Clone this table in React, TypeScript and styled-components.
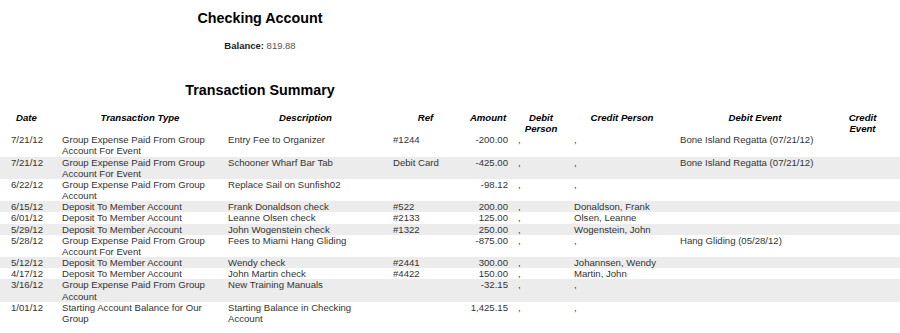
import styled, { createGlobalStyle } from 'styled-components';

type Row = {
  date: string;
  type: string;
  description: string;
  ref: string;
  amount: string;
  debitPerson: string;
  creditPerson: string;
  debitEvent: string;
  creditEvent: string;
};

type Column = {
  key: keyof Row;
  title: string;
  width: number;
  align?: 'left' | 'right';
};

const columns: Column[] = [
  { key: 'date', title: 'Date', width: 57 },
  { key: 'type', title: 'Transaction Type', width: 166 },
  { key: 'description', title: 'Description', width: 165 },
  { key: 'ref', title: 'Ref', width: 75 },
  { key: 'amount', title: 'Amount', width: 50, align: 'right' },
  { key: 'debitPerson', title: 'Debit Person', width: 56 },
  { key: 'creditPerson', title: 'Credit Person', width: 106 },
  { key: 'debitEvent', title: 'Debit Event', width: 160 },
  { key: 'creditEvent', title: 'Credit Event', width: 65 },
];

const expense = 'Group Expense Paid From Group Account For Event';
const deposit = 'Deposit To Member Account';

const rows: Row[] = [
  { date: '7/21/12', type: expense, description: 'Entry Fee to Organizer', ref: '#1244', amount: '-200.00', debitPerson: ',', creditPerson: ',', debitEvent: 'Bone Island Regatta (07/21/12)', creditEvent: '' },
  { date: '7/21/12', type: expense, description: 'Schooner Wharf Bar Tab', ref: 'Debit Card', amount: '-425.00', debitPerson: ',', creditPerson: ',', debitEvent: 'Bone Island Regatta (07/21/12)', creditEvent: '' },
  { date: '6/22/12', type: 'Group Expense Paid From Group Account', description: 'Replace Sail on Sunfish02', ref: '', amount: '-98.12', debitPerson: ',', creditPerson: ',', debitEvent: '', creditEvent: '' },
  { date: '6/15/12', type: deposit, description: 'Frank Donaldson check', ref: '#522', amount: '200.00', debitPerson: ',', creditPerson: 'Donaldson, Frank', debitEvent: '', creditEvent: '' },
  { date: '6/01/12', type: deposit, description: 'Leanne Olsen check', ref: '#2133', amount: '125.00', debitPerson: ',', creditPerson: 'Olsen, Leanne', debitEvent: '', creditEvent: '' },
  { date: '5/29/12', type: deposit, description: 'John Wogenstein check', ref: '#1322', amount: '250.00', debitPerson: ',', creditPerson: 'Wogenstein, John', debitEvent: '', creditEvent: '' },
  { date: '5/28/12', type: expense, description: 'Fees to Miami Hang Gliding', ref: '', amount: '-875.00', debitPerson: ',', creditPerson: ',', debitEvent: 'Hang Gliding (05/28/12)', creditEvent: '' },
  { date: '5/12/12', type: deposit, description: 'Wendy check', ref: '#2441', amount: '300.00', debitPerson: ',', creditPerson: 'Johannsen, Wendy', debitEvent: '', creditEvent: '' },
  { date: '4/17/12', type: deposit, description: 'John Martin check', ref: '#4422', amount: '150.00', debitPerson: ',', creditPerson: 'Martin, John', debitEvent: '', creditEvent: '' },
  { date: '3/16/12', type: 'Group Expense Paid From Group Account', description: 'New Training Manuals', ref: '', amount: '-32.15', debitPerson: ',', creditPerson: ',', debitEvent: '', creditEvent: '' },
  { date: '1/01/12', type: 'Starting Account Balance for Our Group', description: 'Starting Balance in Checking Account', ref: '', amount: '1,425.15', debitPerson: ',', creditPerson: ',', debitEvent: '', creditEvent: '' },
];

function App() {
  const last = columns.length - 1;
  return (
    <Page>
      <GlobalStyle />
      <Heading>
        <Title>Checking Account</Title>
        <BalanceLine>
          <BalanceLabel>Balance:</BalanceLabel> <BalanceValue>819.88</BalanceValue>
        </BalanceLine>
        <SummaryTitle>Transaction Summary</SummaryTitle>
      </Heading>
      <Table>
        <thead>
          <tr>
            {columns.map((col, i) => (
              <HeadCell key={col.key} $first={i === 0} $last={i === last} style={{ width: col.width }}>
                {col.title}
              </HeadCell>
            ))}
          </tr>
        </thead>
        <tbody>
          {rows.map((row, r) => (
            <tr key={r}>
              {columns.map((col, i) => (
                <Cell key={col.key} $first={i === 0} $last={i === last} $align={col.align ?? 'left'}>
                  {row[col.key]}
                </Cell>
              ))}
            </tr>
          ))}
        </tbody>
      </Table>
    </Page>
  );
}

export default App;

const GlobalStyle = createGlobalStyle`
  body {
    margin: 0;
    background: #ffffff;
    font-family: "Liberation Sans", Arial, sans-serif;
  }
`;

const Page = styled.div`
  width: 900px;
  font-family: "Liberation Sans", Arial, sans-serif;
  color: #000;
`;

const Heading = styled.div`
  width: 520px;
  text-align: center;
`;

const Title = styled.h1`
  margin: 10px 0 0;
  font-size: 14.3px;
  line-height: 16px;
  font-weight: bold;
`;

const BalanceLine = styled.div`
  margin-top: 14px;
  font-size: 9.5px;
  line-height: 11px;
`;

const BalanceLabel = styled.span`
  font-weight: bold;
  color: #222;
`;

const BalanceValue = styled.span`
  color: #555;
`;

const SummaryTitle = styled.h2`
  margin: 31px 0 0;
  font-size: 14.3px;
  line-height: 16px;
  font-weight: bold;
`;

const Table = styled.table`
  margin-top: 14px;
  width: 900px;
  table-layout: fixed;
  border-collapse: collapse;
  font-size: 9.6px;
  line-height: 11.15px;

  tbody tr:nth-child(even) {
    background: #ececec;
  }
`;

const HeadCell = styled.th<{ $first: boolean; $last: boolean }>`
  box-sizing: border-box;
  padding: 0 ${(p) => (p.$first || p.$last ? 15 : 5)}px 0 ${(p) => (p.$first ? 11 : 5)}px;
  text-align: center;
  vertical-align: top;
  font-weight: bold;
  font-style: italic;
  color: #000;
`;

const Cell = styled.td<{ $first: boolean; $last: boolean; $align: 'left' | 'right' }>`
  padding: 0 ${(p) => (p.$first || p.$last ? 15 : 5)}px 0 ${(p) => (p.$first ? 11 : 5)}px;
  text-align: ${(p) => p.$align};
  vertical-align: top;
  color: #333;
`;
